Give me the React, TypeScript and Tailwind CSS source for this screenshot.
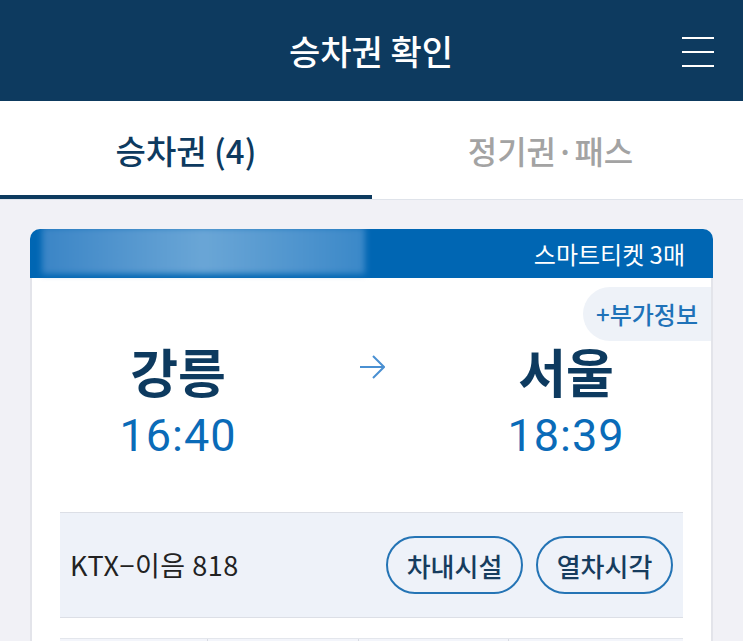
const kr = { fontFamily: '"Noto Sans CJK KR", "Noto Sans", sans-serif' }

function Header() {
  return (
    <header className="flex h-[101px] items-center bg-[#0d3a5f]">
      <div className="w-[60px]" />
      <h1 className="flex-1 text-center text-[34px] font-medium leading-none text-white">
        승차권 확인
      </h1>
      <button className="mr-[29px] flex w-[32px] flex-col gap-[12px] pt-[2px]">
        <span className="h-[2px] w-full bg-white" />
        <span className="h-[2px] w-full bg-white" />
        <span className="h-[2px] w-full bg-white" />
      </button>
    </header>
  )
}

function Tabs() {
  return (
    <div className="flex h-[99px] border-b border-[#dfe3ea] bg-white">
      <div className="flex w-[372px] flex-col">
        <div className="flex flex-1 items-center justify-center pt-[6px] text-[33px] font-medium text-[#0d3a5f]">
          승차권 (4)
        </div>
        <div className="h-[4px] bg-[#0d3a5f]" />
      </div>
      <div className="flex flex-1 items-center justify-center pr-[14px] text-[32px] font-medium text-[#a3a3a3]">
        정기권·패스
      </div>
    </div>
  )
}

function Station({ name, time }: { name: string; time: string }) {
  return (
    <div className="flex w-[240px] flex-col items-center">
      <div className="text-[52px] font-bold leading-[60px] text-[#0d3a5f]">{name}</div>
      <div className="mt-[11px] font-['Roboto',sans-serif] text-[45px] leading-[48px] tracking-[1px] text-[#0a6bb8]">
        {time}
      </div>
    </div>
  )
}

function Pill({ label }: { label: string }) {
  return (
    <button className="flex h-[58px] w-[137px] items-center justify-center rounded-full border-2 border-[#2474b5] text-[26px] font-medium text-[#163c5e]">
      {label}
    </button>
  )
}

export default function App() {
  return (
    <div className="h-[641px] w-[743px] overflow-hidden bg-[#f1f1f6]" style={kr}>
      <Header />
      <Tabs />
      <main className="px-[30px] pt-[29px]">
        <section className="overflow-hidden rounded-t-[10px]">
          <div className="relative flex h-[49px] items-center justify-end bg-[#0066b3] pr-[28px]">
            <div className="absolute left-[12px] top-[-2px] h-[47px] w-[323px] bg-gradient-to-r from-[#3a85c6] via-[#6aa6d6] to-[#3a88c8] blur-[3px]" />
            <span className="text-[24px] text-white">스마트티켓 3매</span>
          </div>
          <div className="border-x-2 border-[#e3e4ea] bg-white pb-[40px]">
            <div className="flex justify-end pt-[9px]">
              <div className="flex h-[54px] w-[128px] items-center justify-center rounded-l-full bg-[#eef2f8] text-[24px] font-medium text-[#1f72b8]">
                +부가정보
              </div>
            </div>
            <div className="flex items-start pl-[26px]">
              <Station name="강릉" time="16:40" />
              <div className="flex w-[148px] justify-center pt-[14px]">
                <svg width="26" height="24" viewBox="0 0 26 24" fill="none" stroke="#4a90d2" strokeWidth="2">
                  <path d="M1 12h23" />
                  <path d="M14 1l11 11-11 11" />
                </svg>
              </div>
              <Station name="서울" time="18:39" />
            </div>
            <div className="mx-[28px] mt-[52px] flex h-[106px] items-center border-y border-[#dcdfe6] bg-[#eef2f9] pl-[10px] pr-[10px]">
              <span className="flex-1 text-[27px] tracking-[0.5px] text-[#222]">KTX−이음 818</span>
              <div className="flex gap-[13px]">
                <Pill label="차내시설" />
                <Pill label="열차시각" />
              </div>
            </div>
            <div className="mx-[28px] mt-[20px] grid h-[40px] grid-cols-[148px_151px_150px_1fr] border-t border-[#e3e6ec] bg-[#f3f5fb]">
              <div className="border-r border-[#d8dbe2]" />
              <div className="border-r border-[#d8dbe2]" />
              <div className="border-r border-[#d8dbe2]" />
              <div />
            </div>
          </div>
        </section>
      </main>
    </div>
  )
}
